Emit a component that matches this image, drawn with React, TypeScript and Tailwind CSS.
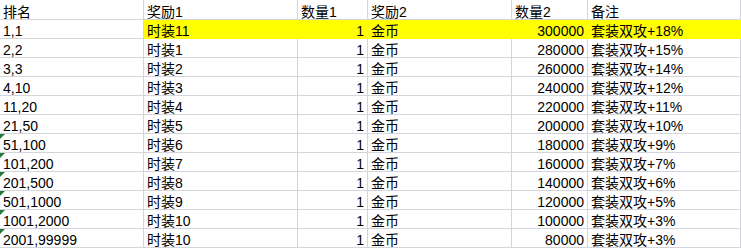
import React from "react";

type Row = {
  rank: string;
  reward1: string;
  qty1: string;
  reward2: string;
  qty2: string;
  note: string;
  flag?: boolean;
  highlight?: boolean;
};

const rows: Row[] = [
  { rank: "1,1", reward1: "时装11", qty1: "1", reward2: "金币", qty2: "300000", note: "套装双攻+18%", highlight: true },
  { rank: "2,2", reward1: "时装1", qty1: "1", reward2: "金币", qty2: "280000", note: "套装双攻+15%" },
  { rank: "3,3", reward1: "时装2", qty1: "1", reward2: "金币", qty2: "260000", note: "套装双攻+14%" },
  { rank: "4,10", reward1: "时装3", qty1: "1", reward2: "金币", qty2: "240000", note: "套装双攻+12%" },
  { rank: "11,20", reward1: "时装4", qty1: "1", reward2: "金币", qty2: "220000", note: "套装双攻+11%" },
  { rank: "21,50", reward1: "时装5", qty1: "1", reward2: "金币", qty2: "200000", note: "套装双攻+10%" },
  { rank: "51,100", reward1: "时装6", qty1: "1", reward2: "金币", qty2: "180000", note: "套装双攻+9%", flag: true },
  { rank: "101,200", reward1: "时装7", qty1: "1", reward2: "金币", qty2: "160000", note: "套装双攻+7%", flag: true },
  { rank: "201,500", reward1: "时装8", qty1: "1", reward2: "金币", qty2: "140000", note: "套装双攻+6%", flag: true },
  { rank: "501,1000", reward1: "时装9", qty1: "1", reward2: "金币", qty2: "120000", note: "套装双攻+5%", flag: true },
  { rank: "1001,2000", reward1: "时装10", qty1: "1", reward2: "金币", qty2: "100000", note: "套装双攻+3%", flag: true },
  { rank: "2001,99999", reward1: "时装10", qty1: "1", reward2: "金币", qty2: "80000", note: "套装双攻+3%", flag: true },
];

const cell = "relative flex items-end h-[19px] border-r border-b border-[#d4d4dc] leading-[14px] whitespace-nowrap overflow-hidden";
const head = "relative flex items-end h-[20px] border-r border-b border-[#d4d4dc] leading-[14px] whitespace-nowrap pl-[3px]";
const yellow = "bg-[#ffff00] border-[#ffff00]";

export default function App() {
  return (
    <div
      className="w-[741px] h-[248px] bg-white text-black text-[14px] overflow-hidden"
      style={{ fontFamily: '"Liberation Sans", "Noto Sans CJK SC", sans-serif' }}
    >
      <div className="grid grid-cols-[144px_154px_70px_144px_76px_153px]">
        <div className={head}>排名</div>
        <div className={head}>奖励1</div>
        <div className={head}>数量1</div>
        <div className={head}>奖励2</div>
        <div className={head}>数量2</div>
        <div className={head}>备注</div>

        {rows.map((r) => (
          <React.Fragment key={r.rank}>
            <div className={`${cell} pl-[3px]`}>
              {r.flag && (
                <span className="absolute left-0 top-0 w-0 h-0 border-t-[5px] border-r-[5px] border-t-[#227a3a] border-r-transparent" />
              )}
              {r.rank}
            </div>
            <div className={`${cell} pl-[3px] ${r.highlight ? yellow : ""}`}>{r.reward1}</div>
            <div className={`${cell} justify-end pr-[3px] ${r.highlight ? yellow : ""}`}>{r.qty1}</div>
            <div className={`${cell} pl-[3px] ${r.highlight ? yellow : ""}`}>{r.reward2}</div>
            <div className={`${cell} justify-end pr-[3px] ${r.highlight ? yellow : ""}`}>{r.qty2}</div>
            <div className={`${cell} pl-[3px] ${r.highlight ? yellow : ""}`}>{r.note}</div>
          </React.Fragment>
        ))}
      </div>
    </div>
  );
}
